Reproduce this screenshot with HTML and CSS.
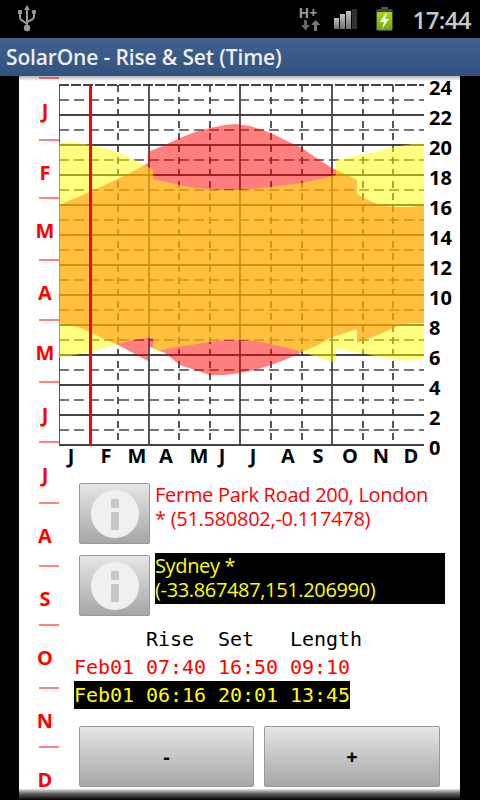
FILE: index.html

```html
<!DOCTYPE html>
<html lang="en">
<head>
  <meta charset="UTF-8">
  <title>SolarOne - Rise &amp; Set (Time)</title>
  <link rel="stylesheet" href="styles.css">
</head>
<body>

  <div class="status">
    <svg class="usb" width="20" height="30" viewBox="0 0 20 30">
      <path d="M10 3V22M3 9V13Q3 16 6 17L10 20M17 9V12Q17 15 14 16L10 18" fill="none" stroke="#999" stroke-width="2"/>
      <path d="M10 1L13 6H7Z" fill="#999"/>
      <rect x="1" y="6" width="4" height="4" fill="#999"/>
      <circle cx="17" cy="8" r="2.2" fill="#999"/>
      <circle cx="10" cy="24" r="3.2" fill="#999"/>
    </svg>
    <div class="net">
      <span class="net-type">H+</span>
      <svg width="20" height="11" viewBox="0 0 20 11">
        <path d="M3 0H6V5H9L4.500 10.500L0 5H3Z" fill="#666"/>
        <path d="M13 11H16V5H19.500L14.500 0L10 5H13Z" fill="#777"/>
      </svg>
    </div>
    <svg class="signal" width="24" height="22" viewBox="0 0 24 22">
      <defs>
        <linearGradient id="bar" x1="0" y1="0" x2="0" y2="1">
          <stop offset="0" stop-color="#c4c4c4"/>
          <stop offset="1" stop-color="#707070"/>
        </linearGradient>
      </defs>
      <rect x="0" y="9" width="5" height="11" fill="url(#bar)"/>
      <rect x="6" y="5" width="5" height="15" fill="url(#bar)"/>
      <rect x="12" y="2" width="5" height="18" fill="url(#bar)"/>
      <rect x="18" y="0" width="5" height="20" fill="#333"/>
    </svg>
    <svg class="battery" width="17" height="24" viewBox="0 0 17 24">
      <defs>
        <linearGradient id="charge" x1="0" y1="0" x2="0" y2="1">
          <stop offset="0" stop-color="#a6d820"/>
          <stop offset="1" stop-color="#6fa800"/>
        </linearGradient>
      </defs>
      <rect x="5" y="0" width="7" height="3" fill="#555"/>
      <rect x="0" y="2" width="17" height="22" rx="2" fill="#444"/>
      <rect x="1" y="5" width="15" height="18" rx="1" fill="url(#charge)"/>
      <path d="M10 6L4 15H8L6 22L13 12H9L11 6Z" fill="#fff"/>
    </svg>
    <div class="clock">17:44</div>
  </div>

  <div class="titlebar">SolarOne - Rise &amp; Set (Time)</div>

  <div class="content">
    <div class="months">
      <div class="month"><span>J</span></div>
      <div class="month"><span>F</span></div>
      <div class="month"><span>M</span></div>
      <div class="month"><span>A</span></div>
      <div class="month"><span>M</span></div>
      <div class="month"><span>J</span></div>
      <div class="month"><span>J</span></div>
      <div class="month"><span>A</span></div>
      <div class="month"><span>S</span></div>
      <div class="month"><span>O</span></div>
      <div class="month"><span>N</span></div>
      <div class="month"><span>D</span></div>
    </div>

    <div class="main">
      <svg class="chart" width="401" height="400" viewBox="59 76 401 400">
        <path class="grid-hour" d="M59 115H424M59 145H424M59 175H424M59 205H424M59 235H424M59 265H424M59 295H424M59 325H424M59 355H424M59 385H424M59 415H424M59 445H424"/>
        <path class="grid-top" d="M59 85H424"/>
        <path class="grid-half" d="M59 100H424M59 130H424M59 160H424M59 190H424M59 220H424M59 250H424M59 280H424M59 310H424M59 340H424M59 370H424M59 400H424M59 430H424"/>
        <path class="grid-week" d="M118 85V445M179 85V445M210 85V445M271 85V445M302 85V445M363 85V445M393 85V445"/>
        <path class="grid-quarter" d="M59 85V445M149 85V445M240 85V445M332 85V445"/>

        <polygon class="sun-home" points="59,205 90,192 130,173 148,163 148,152 165,145 180,138 195,132 210,128 225,125 235,124 250,126 271,133 285,140 302,148 318,159 332,168 345,174 357,180 357,194 366,199 375,203 385,206 395,207 410,207 424,205 424,323 410,323 400,325 380,334 357,343 357,329 345,333 332,337 318,345 302,352 287,359 271,365 255,370 240,373 225,375 210,375 195,370 180,365 165,353 148,346 148,361 133,353 118,345 104,339 90,332 78,327 59,323"/>
        <polygon class="sun-away" points="59,143 70,142 80,143 90,145 104,148 118,152 133,159 148,167 153,170 153,179 175,184 195,188 220,190 240,190 271,187 302,183 332,176 336,175 336,160 355,156 375,152 390,148 400,146 412,144 424,143 424,358 410,361 390,359 375,356 360,353 336,349 336,363 320,358 302,352 287,348 271,344 255,341 240,340 225,340 210,342 190,345 170,348 153,352 153,338 148,338 133,340 118,344 104,348 90,352 75,355 59,358"/>

        <path class="today" d="M90.500 85V445"/>

        <text class="hour" x="429" y="95">24</text>
        <text class="hour" x="429" y="125">22</text>
        <text class="hour" x="429" y="155">20</text>
        <text class="hour" x="429" y="185">18</text>
        <text class="hour" x="429" y="215">16</text>
        <text class="hour" x="429" y="245">14</text>
        <text class="hour" x="429" y="275">12</text>
        <text class="hour" x="429" y="305">10</text>
        <text class="hour" x="429" y="335">8</text>
        <text class="hour" x="429" y="365">6</text>
        <text class="hour" x="429" y="395">4</text>
        <text class="hour" x="429" y="425">2</text>
        <text class="hour" x="429" y="455">0</text>

        <text class="axis" x="71" y="463">J</text>
        <text class="axis" x="106" y="463">F</text>
        <text class="axis" x="137" y="463">M</text>
        <text class="axis" x="166" y="463">A</text>
        <text class="axis" x="199" y="463">M</text>
        <text class="axis" x="222" y="463">J</text>
        <text class="axis" x="253" y="463">J</text>
        <text class="axis" x="288" y="463">A</text>
        <text class="axis" x="318" y="463">S</text>
        <text class="axis" x="350" y="463">O</text>
        <text class="axis" x="381" y="463">N</text>
        <text class="axis" x="411" y="463">D</text>
      </svg>

      <div class="place">
        <button class="info-btn">
          <svg width="48" height="48" viewBox="0 0 48 48">
            <circle cx="24" cy="24" r="24" fill="#f0f0f0"/>
            <rect x="20" y="9" width="8" height="9" rx="1" fill="#c8c8c8"/>
            <rect x="20" y="22" width="8" height="18" rx="1" fill="#c8c8c8"/>
          </svg>
        </button>
        <div class="place-text home">Ferme Park Road 200, London<br>* (51.580802,-0.117478)</div>
      </div>

      <div class="place">
        <button class="info-btn">
          <svg width="48" height="48" viewBox="0 0 48 48">
            <circle cx="24" cy="24" r="24" fill="#f0f0f0"/>
            <rect x="20" y="9" width="8" height="9" rx="1" fill="#c8c8c8"/>
            <rect x="20" y="22" width="8" height="18" rx="1" fill="#c8c8c8"/>
          </svg>
        </button>
        <div class="place-text away">Sydney *<br>(-33.867487,151.206990)</div>
      </div>

      <div class="times">
        <div class="times-row">      Rise  Set   Length</div>
        <div class="times-row home">Feb01 07:40 16:50 09:10</div>
        <div class="times-row away">Feb01 06:16 20:01 13:45</div>
      </div>

      <div class="steppers">
        <button class="step-btn">-</button>
        <button class="step-btn">+</button>
      </div>
    </div>
  </div>

</body>
</html>
```

FILE: styles.css

```css
body {
  margin: 0;
  width: 480px;
  height: 800px;
  overflow: hidden;
  background: #000;
  font-family: 'Open Sans', 'Noto Sans', sans-serif;
}
.status {
  display: flex;
  align-items: flex-start;
  height: 38px;
  background: #000;
  position: relative;
}
.usb {
  margin: 4px 0 0 17px;
}
.net {
  display: flex;
  flex-direction: column;
  width: 20px;
  margin: 5px 0 0 auto;
  color: #999;
}
.net-type {
  font-size: 14px;
  font-weight: 700;
  line-height: 15px;
}
.net svg {
  margin-top: 0;
  margin-left: 2px;
}
.signal {
  margin: 9px 0 0 15px;
}
.battery {
  margin: 7px 0 0 18px;
}
.clock {
  margin: 3px 9px 0 20px;
  font-size: 24px;
  font-weight: 600;
  line-height: 34px;
  letter-spacing: -0.6px;
  color: #c8c8c8;
}
.titlebar {
  height: 38px;
  padding-left: 6px;
  background: linear-gradient(#40628e, #32527e);
  color: #eee;
  font-size: 21px;
  font-weight: 600;
  line-height: 38px;
  letter-spacing: -0.15px;
  white-space: nowrap;
}
.content {
  position: relative;
  display: flex;
  width: 441px;
  height: 724px;
  margin-left: 19px;
  background: #fff;
  overflow: hidden;
}
.content::before {
  content: "";
  position: absolute;
  top: 0;
  left: 0;
  right: 0;
  height: 5px;
  background: linear-gradient(rgba(0,0,0,0.3), rgba(0,0,0,0));
}
.content::after {
  content: "";
  position: absolute;
  bottom: 0;
  left: 0;
  right: 0;
  height: 11px;
  background: linear-gradient(rgba(0,0,0,0.1), rgba(0,0,0,0.6) 40%, #000);
}
.months {
  display: grid;
  flex: none;
  grid-template-rows: 62px 58px 62px 60px 62px 60px 61px 63px 59px 63px 59px 53px;
  width: 40px;
  padding-top: 1px;
}
.month {
  display: flex;
  justify-content: center;
  color: #f00;
  font-size: 20px;
  font-weight: 700;
  padding-top: 20px;
  padding-left: 12px;
  line-height: 27px;
  background: linear-gradient(#ff8080, #ff8080) no-repeat 20px 0 / 20px 2px;
}
.main {
  flex: none;
  width: 401px;
}
.chart {
  display: block;
}
.grid-hour, .grid-top, .grid-half, .grid-week, .grid-quarter {
  fill: none;
  stroke-width: 1.8;
}
.grid-hour {
  stroke: #444;
}
.grid-top {
  stroke: #444;
  stroke-dasharray: 10 2;
}
.grid-half {
  stroke: #777;
  stroke-dasharray: 10 5;
}
.grid-week {
  stroke: #444;
  stroke-dasharray: 7 5;
}
.grid-quarter {
  stroke: #444;
}
.sun-home {
  fill: rgba(255, 0, 0, 0.5);
}
.sun-away {
  fill: rgba(255, 255, 0, 0.5);
}
.today {
  fill: none;
  stroke: #f00;
  stroke-width: 3;
}
.hour, .axis {
  fill: #000;
  font-size: 20px;
  font-weight: 700;
}
.axis {
  text-anchor: middle;
}
.place {
  display: flex;
  align-items: flex-start;
  gap: 5px;
  margin: 7px 0 0 20px;
  height: 61px;
}
.place + .place {
  margin-top: 11px;
}
.info-btn, .step-btn {
  padding: 0;
  border: 1px solid #999;
  border-radius: 2px;
  background: linear-gradient(#e6e6e6, #a6a6a6);
  color: #000;
  font-family: inherit;
  font-weight: 700;
}
.info-btn {
  display: flex;
  flex: none;
  align-items: center;
  justify-content: center;
  width: 71px;
  height: 61px;
}
.place-text {
  font-size: 20px;
  line-height: 24px;
  letter-spacing: -0.35px;
  white-space: nowrap;
}
.place-text.home {
  color: #f00;
  letter-spacing: -0.28px;
}
.place-text.away {
  width: 290px;
  margin-top: -2px;
  padding: 1px 0 2px;
  background: #000;
  color: #ff0;
}
.times {
  margin: 9px 0 0 15px;
  font-family: 'DejaVu Sans Mono', monospace;
  font-size: 20px;
  line-height: 28px;
  letter-spacing: -0.04px;
}
.times-row {
  width: 276px;
  white-space: pre;
  color: #000;
}
.times-row.home {
  color: #f00;
}
.times-row.away {
  background: #000;
  color: #ff0;
}
.steppers {
  display: flex;
  gap: 10px;
  margin: 17px 0 0 20px;
}
.step-btn {
  width: 175px;
  height: 61px;
  font-size: 20px;
}
.step-btn + .step-btn {
  width: 176px;
}
```
